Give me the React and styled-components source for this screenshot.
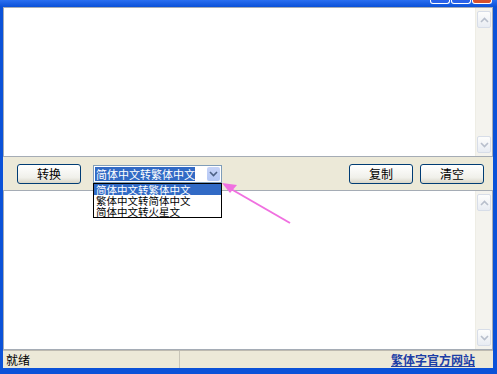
import React from "react"
import styled, { createGlobalStyle } from "styled-components"

const Global = createGlobalStyle`
  body {
    margin: 0;
    padding: 0;
    font-family: "Noto Sans CJK SC", "Liberation Sans", sans-serif;
  }
`

const Frame = styled.div`
  position: relative;
  width: 497px;
  height: 374px;
  box-sizing: border-box;
  background: #0b52d8;
  display: flex;
  flex-direction: column;
  overflow: hidden;
`

const TitleStrip = styled.div`
  height: 7px;
  display: flex;
  justify-content: flex-end;
  gap: 1px;
  padding-right: 5px;
  background: linear-gradient(#2a6ff0, #0a50d8);
`

const CapButton = styled.div`
  width: 18px;
  height: 3px;
  border: 1px solid #fff;
  border-top: none;
  border-radius: 0 0 3px 3px;
  background: ${p => (p.$close ? "#d8512c" : "#2a62e8")};
`

const Body = styled.div`
  flex: 1;
  margin: 0 4px 6px 3px;
  background: #ece9d8;
  display: flex;
  flex-direction: column;
`

const TextArea = styled.div`
  height: ${p => p.$h}px;
  box-sizing: border-box;
  background: #fff;
  border: 1px solid #a5acb5;
  display: flex;
  justify-content: flex-end;
`

const ScrollBar = styled.div`
  width: 16px;
  background: #f4f3ee;
  border-left: 1px solid #eeede5;
  display: flex;
  flex-direction: column;
  justify-content: space-between;
  padding: 3px 0;
`

const ScrollBtn = styled.div`
  height: 15px;
  margin: 0 1px;
  border: 1px solid #d7dde8;
  border-radius: 2px;
  background: linear-gradient(#fdfdfc, #e8ecf3);
  display: flex;
  align-items: center;
  justify-content: center;
`

const ControlRow = styled.div`
  height: 33px;
  position: relative;
  display: flex;
  align-items: center;
  padding: 0 9px 0 14px;
`

const Button = styled.div`
  width: 64px;
  height: 20px;
  box-sizing: border-box;
  border: 1px solid #003c74;
  border-radius: 3px;
  background: linear-gradient(#ffffff, #f0f0ea 70%, #d8d5c7);
  font-size: 12px;
  display: flex;
  align-items: center;
  justify-content: center;
  color: #000;
  margin-left: ${p => p.$ml || 0}px;
`

const Spacer = styled.div`
  flex: 1;
`

const Select = styled.div`
  position: relative;
  margin-left: 12px;
  width: 129px;
  height: 18px;
  box-sizing: border-box;
  border: 1px solid #7f9db9;
  background: #fff;
  display: flex;
  align-items: center;
  padding: 1px;
`

const SelectText = styled.div`
  flex: 1;
  height: 100%;
  background: #316ac5;
  color: #fff;
  font-size: 11px;
  line-height: 14px;
  padding-left: 1px;
  white-space: nowrap;
`

const DropBtn = styled.div`
  width: 15px;
  height: 14px;
  margin-left: 12px;
  border-radius: 2px;
  background: linear-gradient(#c6d3f7, #b3c7f5);
  display: flex;
  align-items: center;
  justify-content: center;
`

const DropList = styled.div`
  position: absolute;
  top: 17px;
  left: -1px;
  width: 129px;
  box-sizing: border-box;
  border: 1px solid #000;
  background: #fff;
  z-index: 3;
`

const Option = styled.div`
  font-size: 10.5px;
  line-height: 11px;
  height: 11px;
  padding-left: 2px;
  white-space: nowrap;
  background: ${p => (p.$on ? "#316ac5" : "#fff")};
  color: ${p => (p.$on ? "#fff" : "#000")};
`

const StatusBar = styled.div`
  flex: 1;
  display: flex;
  align-items: center;
  font-size: 12px;
  border-top: 1px solid #bdbab0;
`

const StatusCell = styled.div`
  width: 173px;
  padding-left: 3px;
  border-right: 1px solid #c8c5b8;
  height: 100%;
  display: flex;
  align-items: center;
`

const Link = styled.a`
  margin-left: auto;
  margin-right: 18px;
  color: #1d3fa6;
  font-weight: bold;
  text-decoration: underline;
  font-size: 12px;
`

const Arrow = styled.svg`
  position: absolute;
  left: 0;
  top: 0;
  pointer-events: none;
  z-index: 5;
`

const Chevron = ({ up, color = "#4d6185" }) => (
  <svg width="9" height="6" viewBox="0 0 9 6">
    <path
      d={up ? "M1 5 L4.5 1.5 L8 5" : "M1 1 L4.5 4.5 L8 1"}
      stroke={color}
      strokeWidth="1.6"
      fill="none"
    />
  </svg>
)

const Scroll = () => (
  <ScrollBar>
    <ScrollBtn>
      <Chevron up color="#b8bfcc" />
    </ScrollBtn>
    <ScrollBtn>
      <Chevron color="#b8bfcc" />
    </ScrollBtn>
  </ScrollBar>
)

export default function App() {
  return (
    <Frame>
      <Global />
      <TitleStrip>
        <CapButton />
        <CapButton />
        <CapButton $close />
      </TitleStrip>
      <Body>
        <TextArea $h={150}>
          <Scroll />
        </TextArea>
        <ControlRow>
          <Button>转换</Button>
          <Select>
            <SelectText>简体中文转繁体中文</SelectText>
            <DropBtn>
              <Chevron />
            </DropBtn>
            <DropList>
              <Option $on>简体中文转繁体中文</Option>
              <Option>繁体中文转简体中文</Option>
              <Option>简体中文转火星文</Option>
            </DropList>
          </Select>
          <Spacer />
          <Button>复制</Button>
          <Button $ml={7}>清空</Button>
        </ControlRow>
        <TextArea $h={160}>
          <Scroll />
        </TextArea>
        <StatusBar>
          <StatusCell>就绪</StatusCell>
          <Link>繁体字官方网站</Link>
        </StatusBar>
      </Body>
      <Arrow width="497" height="374">
        <line x1="290" y1="223" x2="231" y2="189" stroke="#f070e0" strokeWidth="2" />
        <path d="M222 183 L237 185 L230 193 Z" fill="#f070e0" />
      </Arrow>
    </Frame>
  )
}
